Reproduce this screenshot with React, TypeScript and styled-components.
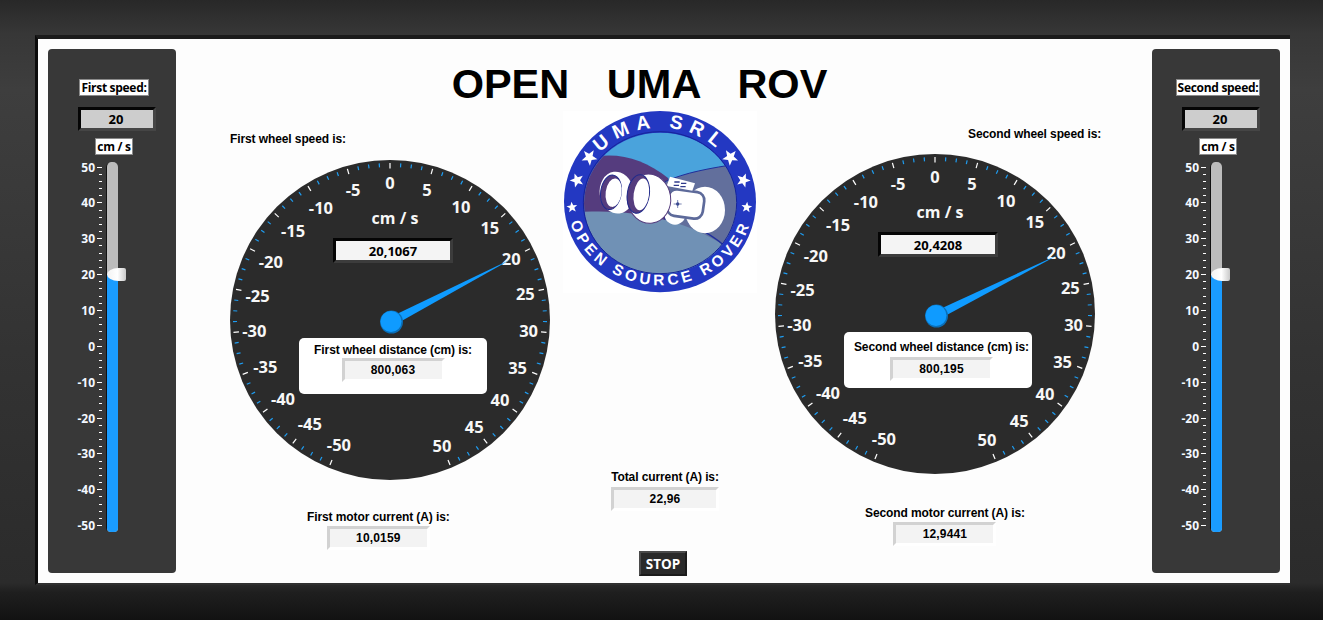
import React from 'react'
import styled, { createGlobalStyle } from 'styled-components'

const blue = '#0f9bff'
const dial = '#2b2b2b'
const uiFont = '"Open Sans", "Liberation Sans", sans-serif'
const labelFont = '"Liberation Sans", Arial, sans-serif'

const GlobalStyle = createGlobalStyle`
  html, body {
    margin: 0;
    width: 1323px;
    height: 620px;
    overflow: hidden;
    background: #2b2b2b;
  }
`

const Page = styled.div`
  width: 1323px;
  height: 620px;
  box-sizing: border-box;
  padding: 35px 33px 35px 35px;
  background: linear-gradient(
    180deg,
    #282828 0,
    #373737 34px,
    #3e3e3e 90px,
    #333 350px,
    #2b2b2b 583px,
    #1f1f1f 592px,
    #121212 620px
  );
`

const Frame = styled.div`
  height: 100%;
  box-sizing: border-box;
  display: flex;
  justify-content: space-between;
  padding: 10px;
  background: #fdfdfd;
  border-top: 4px solid #1c1c1c;
  border-left: 3px solid #0c0c0c;
  border-bottom: 2px solid #303030;
`

const Panel = styled.aside`
  width: 128px;
  flex: none;
  box-sizing: border-box;
  padding: 30px 0 0 4px;
  display: flex;
  flex-direction: column;
  align-items: center;
  background: #383838;
  border-radius: 4px;
`

const Tag = styled.div<{ $gap: number }>`
  height: 17px;
  box-sizing: border-box;
  padding: 0 1px;
  margin-bottom: ${(p) => p.$gap}px;
  display: flex;
  align-items: center;
  background: #fff;
  border: 1px solid #8a8a8a;
  color: #000;
  font: 700 12px ${uiFont};
  letter-spacing: -0.3px;
  white-space: nowrap;
`

const SetPoint = styled.div`
  width: 78px;
  height: 24px;
  margin: 0 0 7px 5px;
  padding-right: 1px;
  box-sizing: border-box;
  display: flex;
  align-items: center;
  justify-content: center;
  background: #cdcdcd;
  border-style: solid;
  border-width: 3px;
  border-color: #050505 #454545 #454545 #050505;
  color: #000;
  font: 700 13px ${uiFont};
`

const Slider = styled.div`
  align-self: flex-start;
  margin: 0 0 0 16px;
  display: flex;
  gap: 4px;
  height: 370px;
`

const Scale = styled.div`
  width: 34px;
  box-sizing: border-box;
  padding: 5px 0 6px;
  display: flex;
  flex-direction: column;
  justify-content: space-between;
  align-items: flex-end;
`

const ScaleRow = styled.div`
  height: 0;
  display: flex;
  align-items: center;
  gap: 2px;
  color: #f4f8ff;
  font: 700 12px ${uiFont};
  white-space: nowrap;
`

const ScaleTick = styled.span<{ $major: boolean }>`
  width: ${(p) => (p.$major ? 5 : 3)}px;
  height: 1px;
  background: #fff;
`

const Track = styled.div`
  position: relative;
  width: 12px;
  box-sizing: border-box;
  border-left: 1px solid #111;
  background: #bcbcbc;
  border-radius: 5px 5px 4px 4px;
`

const TrackFill = styled.div`
  position: absolute;
  left: 0;
  right: 0;
  bottom: 0;
  background: #1a9cff;
  border-radius: 0 0 4px 4px;
`

const Thumb = styled.div`
  position: absolute;
  left: 0;
  width: 19px;
  height: 13px;
  margin-bottom: -6px;
  background: linear-gradient(90deg, #f2f2f2 0, #fff 55%, #c9c9c9 100%);
  border-radius: 60% 2px 2px 60% / 50% 2px 2px 50%;
`

const Board = styled.main`
  flex: 1;
  display: grid;
  grid-template-columns: 374px 225px 1fr;
  grid-template-rows: 62px 1fr;
`

const Title = styled.h1`
  grid-column: 1 / -1;
  margin: 0;
  padding: 11px 49px 0 0;
  text-align: center;
  color: #000;
  font: 700 41.5px/48px ${labelFont};
  white-space: pre;
  word-spacing: 1px;
`

const GaugeColumn = styled.section<{ $inset: number }>`
  padding-left: ${(p) => p.$inset}px;
  display: flex;
  flex-direction: column;
  align-items: flex-start;
`

const Caption = styled.div`
  color: #000;
  font: 700 12px/14px ${labelFont};
  letter-spacing: -0.1px;
  white-space: nowrap;
`

const SpeedCaption = styled(Caption)<{ $top: number; $left: number; $gap: number }>`
  margin: ${(p) => p.$top}px 0 ${(p) => p.$gap}px ${(p) => p.$left}px;
`

const GaugeBox = styled.div`
  position: relative;
  width: 320px;
  height: 320px;
`

const GaugeSvg = styled.svg`
  display: block;
`

const GaugeText = styled.text<{ $size: number }>`
  fill: #f7f7f7;
  font: 700 ${(p) => p.$size}px ${uiFont};
  text-anchor: middle;
  dominant-baseline: central;
`

const GaugeReadout = styled.div`
  position: absolute;
  left: 103px;
  top: 78px;
  width: 120px;
  height: 25px;
  box-sizing: border-box;
  display: flex;
  align-items: center;
  justify-content: center;
  background: #f4f4f4;
  border-style: solid;
  border-width: 3px;
  border-color: #050505 #3c3c3c #3c3c3c #050505;
  color: #000;
  font: 700 13px ${uiFont};
`

const DistanceCard = styled.div<{ $shift: number; $top: number; $gap: number }>`
  position: absolute;
  left: 69px;
  top: 178px;
  width: 188px;
  height: 56px;
  box-sizing: border-box;
  padding: ${(p) => p.$top}px 0 0 ${(p) => p.$shift}px;
  display: flex;
  flex-direction: column;
  align-items: center;
  gap: ${(p) => p.$gap}px;
  background: #fff;
  border-radius: 5px;
`

const Field = styled.div<{ $width: number }>`
  width: ${(p) => p.$width}px;
  height: 24px;
  box-sizing: border-box;
  display: flex;
  align-items: center;
  justify-content: center;
  background: #f3f3f3;
  border-style: solid;
  border-width: 3px;
  border-color: #d2d2d2 #fff #fff #d2d2d2;
  color: #000;
  font: 700 12px ${labelFont};
  letter-spacing: 0.15px;
`

const Reading = styled.div<{ $top: number; $left: number; $gap: number }>`
  margin: ${(p) => p.$top}px 0 0 ${(p) => p.$left}px;
  display: flex;
  flex-direction: column;
  align-items: center;
  gap: ${(p) => p.$gap}px;
`

const CenterColumn = styled.section`
  display: flex;
  flex-direction: column;
  align-items: flex-start;
`

const LogoSvg = styled.svg`
  display: block;
  margin-left: 13px;
`

const StopButton = styled.button`
  width: 48px;
  height: 25px;
  margin: 40px 0 0 89px;
  padding: 0;
  box-sizing: border-box;
  background: #2a2a2a;
  border: 2px solid;
  border-color: #4a4a4a #1b1b1b #1b1b1b #4a4a4a;
  color: #fff;
  font: 700 13.5px ${uiFont};
`

const angleOf = (v: number) => (v * 3.15 * Math.PI) / 180

const polar = (r: number, v: number) => ({
  x: 160 + r * Math.sin(angleOf(v)),
  y: 160 - r * Math.cos(angleOf(v)),
})

// the dial numbers don't sit on a perfect circle in the original
const labelNudge: Record<number, [number, number]> = {
  [-10]: [2, 3],
  [-15]: [3, 3],
  [-20]: [2, 3],
  [-25]: [1, 2],
  [-35]: [3, -1],
  [-40]: [3, -1],
  [-45]: [4, -3],
  [-50]: [1, -1],
  0: [0, -2],
  10: [0, 2],
  25: [2, 0],
  30: [3, 0],
}

interface GaugeProps {
  value: number
  text: string
  distanceLabel: string
  distance: string
  shift: number
  cardTop: number
  cardGap: number
}

const Gauge: React.FC<GaugeProps> = ({ value, text, distanceLabel, distance, shift, cardTop, cardGap }) => {
  const ticks: number[] = []
  for (let v = -50; v <= 50; v += 1.25) ticks.push(v)
  const labels: number[] = []
  for (let v = -50; v <= 50; v += 5) labels.push(v)
  const tip = polar(138, value)
  const a = angleOf(value)
  const hx = 161.5
  const hy = 161.5
  const px = 4.5 * Math.cos(a)
  const py = 4.5 * Math.sin(a)
  return (
    <GaugeBox>
      <GaugeSvg width={320} height={320} viewBox="0 0 320 320">
        <circle cx={160} cy={160} r={160} fill={dial} />
        {ticks.map((v) => {
          const major = v % 5 === 0
          const from = polar(major ? 151.5 : 153, v)
          const to = polar(157, v)
          return (
            <line
              key={v}
              x1={from.x}
              y1={from.y}
              x2={to.x}
              y2={to.y}
              stroke={major ? '#fff' : '#1e9df2'}
              strokeWidth={1.2}
            />
          )
        })}
        {labels.map((v) => {
          const at = polar(136, v)
          const [dx, dy] = labelNudge[v] ?? [0, 0]
          return (
            <GaugeText key={v} x={at.x + dx} y={at.y + dy} $size={16.5}>
              {v}
            </GaugeText>
          )
        })}
        <GaugeText x={165} y={58} $size={16}>
          cm / s
        </GaugeText>
        <polygon
          points={`${hx + px},${hy + py} ${hx - px},${hy - py} ${tip.x},${tip.y}`}
          fill={blue}
        />
        <circle cx={hx} cy={hy + 0.5} r={11.5} fill="#0a6fb8" />
        <circle cx={hx - 0.5} cy={hy} r={10.5} fill={blue} />
      </GaugeSvg>
      <GaugeReadout>{text}</GaugeReadout>
      <DistanceCard $shift={shift} $top={cardTop} $gap={cardGap}>
        <Caption>{distanceLabel}</Caption>
        <Field $width={103}>{distance}</Field>
      </DistanceCard>
    </GaugeBox>
  )
}

function scaleRows() {
  const out: number[] = []
  for (let v = 50; v >= -50; v -= 2) out.push(v)
  return out
}

const SpeedPanel: React.FC<{ title: string; value: number }> = ({ title, value }) => {
  const fromBottom = 6 + (value + 50) * 3.58
  return (
    <Panel>
      <Tag $gap={11}>{title}</Tag>
      <SetPoint>{value}</SetPoint>
      <Tag $gap={7}>cm / s</Tag>
      <Slider>
        <Scale>
          {scaleRows().map((v) => (
            <ScaleRow key={v}>
              {v % 10 === 0 && v}
              <ScaleTick $major={v % 10 === 0} />
            </ScaleRow>
          ))}
        </Scale>
        <Track>
          <TrackFill style={{ height: fromBottom }} />
          <Thumb style={{ bottom: fromBottom }} />
        </Track>
      </Slider>
    </Panel>
  )
}

const star = (cx: number, cy: number, r: number, turn: number) => {
  const pts: string[] = []
  for (let i = 0; i < 10; i++) {
    const rad = i % 2 === 0 ? r : r * 0.42
    const t = turn + (i * Math.PI) / 5
    pts.push(`${cx + rad * Math.sin(t)},${cy - rad * Math.cos(t)}`)
  }
  return pts.join(' ')
}

const LogoText = styled.text<{ $size: number }>`
  fill: #fff;
  font: 700 ${(p) => p.$size}px ${labelFont};
`

// drawn in the coordinates of a 3x crop, so the numbers are easy to compare
const Logo = () => (
  <LogoSvg width={194} height={182} viewBox="24 33 582 546">
    <rect x={24} y={33} width={582} height={546} fill="#fff" />
    <defs>
      <clipPath id="logo-inner">
        <ellipse cx={316} cy={310} rx={229} ry={212} />
      </clipPath>
      <path id="logo-top" d="M 75 305 A 241 222 0 0 1 557 305" />
      <path id="logo-bottom" d="M 36 300 A 280 256 0 0 0 596 300" />
    </defs>
    <ellipse cx={315} cy={305} rx={288} ry={272} fill="#2338c2" />
    <g clipPath="url(#logo-inner)">
      <rect x={80} y={90} width={480} height={440} fill="#4aa3dc" />
      <path d="M 80 180 C 170 150 260 170 340 235 L 340 420 L 80 420 Z" fill="#553c7e" />
      <path d="M 330 245 C 390 218 460 205 560 190 L 560 470 L 330 470 Z" fill="#626f9c" stroke="#1f2f9c" strokeWidth={3} />
      <path d="M 80 336 C 240 325 400 365 505 435 L 560 540 L 80 540 Z" fill="#7091b5" />
      <path d="M 400 368 C 440 390 480 410 505 435" fill="none" stroke="#1f2f9c" strokeWidth={4} />
    </g>
    <ellipse cx={315} cy={308} rx={230} ry={213} fill="none" stroke="#16249a" strokeWidth={3} />
    <ellipse cx={450} cy={330} rx={60} ry={70} fill="#fff" />
    <ellipse cx={360} cy={342} rx={32} ry={32} fill="#fff" />
    <rect x={338} y={272} width={108} height={80} rx={24} fill="#fff" stroke="#5d6a9a" strokeWidth={8} transform="rotate(8 392 312)" />
    <polygon points="345,230 420,250 412,272 335,258" fill="#fff" />
    <path d="M 358 246 h 16 M 378 250 h 16 M 356 256 h 16 M 376 260 h 16" stroke="#2f3a8c" strokeWidth={4} />
    <path d="M 368 300 v 24 M 356 312 h 24" stroke="#3a4a90" strokeWidth={2} />
    <circle cx={368} cy={312} r={5} fill="#3a4a90" />
    <ellipse cx={185} cy={278} rx={51} ry={63} fill="#fff" transform="rotate(-8 185 278)" />
    <ellipse cx={168} cy={277} rx={31} ry={52} fill="#553c7e" stroke="#1f2a8c" strokeWidth={3} transform="rotate(8 168 277)" />
    <ellipse cx={176} cy={278} rx={24} ry={43} fill="#fff" transform="rotate(8 176 278)" />
    <ellipse cx={282} cy={296} rx={65} ry={74} fill="#fff" stroke="#553c7e" strokeWidth={3} transform="rotate(-8 282 296)" />
    <ellipse cx={250} cy={282} rx={33} ry={58} fill="#553c7e" stroke="#1f2a8c" strokeWidth={3} transform="rotate(8 250 282)" />
    <ellipse cx={259} cy={283} rx={23} ry={48} fill="#fff" transform="rotate(8 259 283)" />
    <LogoText $size={58} letterSpacing={20}>
      <textPath href="#logo-top" startOffset="50%" textAnchor="middle">
        UMA SRL
      </textPath>
    </LogoText>
    <LogoText $size={46} letterSpacing={11}>
      <textPath href="#logo-bottom" startOffset="50%" textAnchor="middle">
        OPEN SOURCE ROVER
      </textPath>
    </LogoText>
    <polygon points={star(103, 172, 25, -0.7)} fill="#fff" />
    <polygon points={star(66, 241, 22, -0.35)} fill="#fff" />
    <polygon points={star(51, 322, 17, -0.1)} fill="#fff" />
    <polygon points={star(526, 172, 25, 0.7)} fill="#fff" />
    <polygon points={star(565, 241, 22, 0.35)} fill="#fff" />
    <polygon points={star(575, 322, 17, 0.1)} fill="#fff" />
  </LogoSvg>
)

export default function App() {
  return (
    <Page>
      <GlobalStyle />
      <Frame>
        <SpeedPanel title="First speed:" value={20} />
        <Board>
          <Title>{'OPEN   UMA   ROV'}</Title>
          <GaugeColumn $inset={54}>
            <SpeedCaption $top={21} $left={0} $gap={14}>
              First wheel speed is:
            </SpeedCaption>
            <Gauge
              value={20.1067}
              text="20,1067"
              distanceLabel="First wheel distance (cm) is:"
              distance="800,063"
              shift={0}
              cardTop={5}
              cardGap={1}
            />
            <Reading $top={30} $left={77} $gap={2}>
              <Caption>First motor current (A) is:</Caption>
              <Field $width={103}>10,0159</Field>
            </Reading>
          </GaugeColumn>
          <CenterColumn>
            <Logo />
            <Reading $top={177} $left={61} $gap={3}>
              <Caption>Total current (A) is:</Caption>
              <Field $width={108}>22,96</Field>
            </Reading>
            <StopButton>STOP</StopButton>
          </CenterColumn>
          <GaugeColumn $inset={0}>
            <SpeedCaption $top={16} $left={193} $gap={13}>
              Second wheel speed is:
            </SpeedCaption>
            <Gauge
              value={20.4208}
              text="20,4208"
              distanceLabel="Second wheel distance (cm) is:"
              distance="800,195"
              shift={7}
              cardTop={8}
              cardGap={3}
            />
            <Reading $top={32} $left={90} $gap={2}>
              <Caption>Second motor current (A) is:</Caption>
              <Field $width={103}>12,9441</Field>
            </Reading>
          </GaugeColumn>
        </Board>
        <SpeedPanel title="Second speed:" value={20} />
      </Frame>
    </Page>
  )
}
